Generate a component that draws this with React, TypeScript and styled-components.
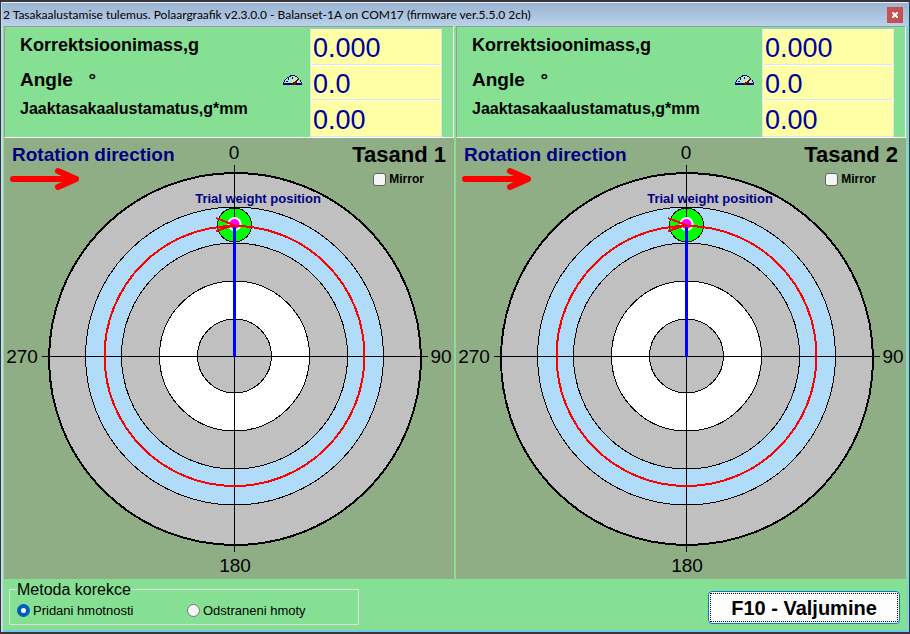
import React, { useState } from "react";
import styled, { createGlobalStyle } from "styled-components";

const GlobalStyle = createGlobalStyle`
  * { box-sizing: border-box; }
  html, body, #root { height: 100%; }
  body { margin: 0; font-family: "Liberation Sans", Arial, sans-serif; color: #000; }
`;

const Window = styled.main`
  min-height: 100%;
  display: flex;
  flex-direction: column;
  background: #85e093;
  border: 1px solid #38343c;
  border-top-width: 2px;
  border-bottom-width: 2px;
  box-shadow: inset 2px 0 #c5d9ea, inset -2px 0 #78d4ea, inset 0 -2px #6fcbe8;
  padding: 0 3px 2px;
`;

const TitleBar = styled.header`
  display: flex;
  align-items: center;
  justify-content: space-between;
  height: 24px;
  margin: 0 -2px;
  padding: 0 5px 0 1px;
  background: linear-gradient(#9ab3d0, #b9d1ea);
  border-top: 1px solid #e6eef7;
`;

const Title = styled.h1`
  margin: 0;
  font: 400 12px/18px Lato, sans-serif;
  white-space: nowrap;
`;

const CloseButton = styled.button`
  display: grid;
  place-items: center;
  width: 16px;
  height: 16px;
  padding: 0;
  border: 0;
  background: #c75050;
`;

const Planes = styled.div`
  display: grid;
  grid-template-columns: 1fr 1fr;
  gap: 2px;
`;

const Plane = styled.section`
  min-width: 0;
`;

const Readings = styled.div`
  display: grid;
  grid-template-columns: 1fr 132px;
  height: 112px;
  padding: 2px 11px 0 15px;
  border: 1px solid #fff;
  border-top-color: #9a9a9a;
  border-left-color: #9a9a9a;
`;

const Labels = styled.div`
  display: grid;
  grid-template-rows: 35px 29px 1fr;
  font-weight: 700;
`;

const ReadingLabel = styled.label<{ $size: number }>`
  display: flex;
  align-items: center;
  justify-content: space-between;
  height: 32px;
  padding-right: 8px;
  font-size: ${(p) => p.$size}px;
  white-space: pre;
`;

const Values = styled.div`
  display: grid;
  grid-template-rows: 36px 35px 1fr;
`;

const Value = styled.input`
  width: 100%;
  min-width: 0;
  padding: 3px 0 0 2px;
  border: 1px solid #e4e4e4;
  border-top-color: #fff;
  background: #ffffa6;
  color: #00009c;
  font: 27px "Liberation Sans", Arial, sans-serif;
  outline: 0;
`;

const Plot = styled.div`
  display: grid;
  background: #8fae86;
  > * { grid-area: 1 / 1; }
`;

const Dial = styled.svg`
  display: block;
  width: 100%;
  height: auto;
  font: 19px "Liberation Sans", Arial, sans-serif;
`;

const PlotHeader = styled.div`
  z-index: 1;
  align-self: start;
  display: flex;
  justify-content: space-between;
  padding: 5px 8px 0 6px;
`;

const Direction = styled.div`
  padding-left: 2px;
  color: #000082;
  font-size: 19px;
  line-height: 24px;
  font-weight: 700;
`;

const PlaneTitle = styled.h2`
  margin: 0;
  font-size: 22px;
  line-height: 24px;
`;

const Mirror = styled.label`
  display: flex;
  align-items: center;
  gap: 3px;
  height: 24px;
  padding-left: 21px;
  font-size: 12px;
  font-weight: 700;
`;

const Check = styled.input`
  appearance: none;
  width: 13px;
  height: 13px;
  margin: 0;
  border: 1px solid #626262;
  border-radius: 3px;
  background: #f5f5f5;
  &:checked { background: #005fb8; }
`;

const Footer = styled.footer`
  flex: 1;
  display: flex;
  align-items: flex-start;
  justify-content: space-between;
  padding: 2px 6px 0 5px;
`;

const Method = styled.fieldset`
  display: grid;
  grid-template-columns: 170px 1fr;
  width: 350px;
  height: 44px;
  margin: 0;
  padding: 0 7px;
  border: 1px solid #dcdcdc;
`;

const Legend = styled.legend`
  padding: 0;
  font-size: 16px;
  line-height: 17px;
`;

const Option = styled.label`
  display: flex;
  align-items: center;
  gap: 3px;
  height: 24px;
  font-size: 13px;
`;

const Radio = styled.input`
  appearance: none;
  width: 13px;
  height: 13px;
  margin: 0;
  border: 1px solid #767676;
  border-radius: 50%;
  background: #f5f5f5;
  &:checked { border: 4px solid #005fb8; background: #fff; }
`;

const ExitButton = styled.button`
  width: 192px;
  height: 33px;
  margin-top: 10px;
  padding: 1px;
  border: 1px solid #0078d4;
  border-radius: 4px;
  background: #fdfdfd;
  font: 700 20px "Liberation Sans", Arial, sans-serif;
  color: #000;
`;

const ExitLabel = styled.span`
  display: block;
  height: 29px;
  border: 1px dotted #000;
  line-height: 29px;
`;

function GaugeIcon() {
  return (
    <svg width="19" height="10" viewBox="0 0 19 10" shapeRendering="crispEdges" aria-hidden="true">
      <path d="M1 8V6h1V4h2V2h3V1h5v1h3v1h1v2h1v2h1v1z" fill="#b5ecc0" />
      <path d="M0 8h19v2H0zM0 7h1v1H0zM1 5h1v2H1zM2 4h1v1H2zM3 3h1v1H3zM4 2h2v1H4zM6 1h2v1H6zM7 0h5v1H7zM12 1h2v1h-2zM14 2h1v1h-1zM17 5h1v2h-1zM18 7h1v1h-1zM9 2h1v2H9zM5 3h1v2H5zM3 6h2v1H3z" fill="#00007c" />
      <path d="M9 8h4v2H9zM10 7h4v1h-4zM12 6h2v1h-2zM13 5h2v1h-2zM14 4h2v1h-2zM15 3h1v1h-1z" fill="#800000" />
    </svg>
  );
}

function ArrowIcon() {
  return (
    <svg width="72" height="24" viewBox="0 0 72 24" aria-hidden="true">
      <path d="M3 12H66M48 4L66 12L48 20" fill="none" stroke="#f00" strokeWidth="6" strokeLinecap="round" strokeLinejoin="round" />
    </svg>
  );
}

function PolarDial() {
  return (
    <Dial viewBox="0 0 450 441" role="img" aria-label="Polar graph">
      <g stroke="#000" shapeRendering="crispEdges">
        <circle cx="231" cy="221" r="186" fill="#c0c0c0" strokeWidth="2" />
        <circle cx="230.5" cy="218" r="149" fill="#b0dcfa" />
        <circle cx="230.5" cy="218" r="113" fill="#c0c0c0" />
        <circle cx="230.5" cy="218" r="75" fill="#fff" />
        <circle cx="230.5" cy="218" r="37" fill="#c0c0c0" />
        <circle cx="230.5" cy="87" r="17" fill="#0f0" />
      </g>
      <g fill="#000">
        <rect x="38" y="218" width="386" height="1" />
        <rect x="230" y="27" width="1" height="387" />
      </g>
      <g fontSize="19" textAnchor="middle">
        <text x="230" y="21">0</text>
        <text x="437" y="225">90</text>
        <text x="231" y="434">180</text>
        <text x="18" y="225">270</text>
      </g>
      <text x="254" y="65" textAnchor="middle" fontSize="13" fontWeight="700" fill="#000082">Trial weight position</text>
      <circle cx="230.5" cy="86" r="6" fill="#f0f" stroke="#fff" strokeWidth="2" />
      <rect x="229" y="88" width="3" height="131" fill="#00f" />
      <g fill="none" stroke="#f00" strokeWidth="2" shapeRendering="crispEdges">
        <circle cx="230.5" cy="218" r="130" />
        <path d="M212 80L230 87L212 93" />
      </g>
    </Dial>
  );
}

const readings = [
  { key: "mass", label: "Korrektsioonimass,g", size: 18, value: "0.000" },
  { key: "angle", label: "Angle   °", size: 19, value: "0.0" },
  { key: "residual", label: "Jaaktasakaalustamatus,g*mm", size: 16, value: "0.00" },
];

function PlanePanel({ index }: { index: number }) {
  return (
    <Plane>
      <Readings>
        <Labels>
          {readings.map((r) => (
            <ReadingLabel key={r.key} htmlFor={`${r.key}-${index}`} $size={r.size}>
              {r.label}
              {r.key === "angle" && <GaugeIcon />}
            </ReadingLabel>
          ))}
        </Labels>
        <Values>
          {readings.map((r) => (
            <Value key={r.key} id={`${r.key}-${index}`} defaultValue={r.value} readOnly />
          ))}
        </Values>
      </Readings>
      <Plot>
        <PolarDial />
        <PlotHeader>
          <div>
            <Direction>Rotation direction</Direction>
            <ArrowIcon />
          </div>
          <div>
            <PlaneTitle>Tasand {index}</PlaneTitle>
            <Mirror>
              <Check type="checkbox" />
              Mirror
            </Mirror>
          </div>
        </PlotHeader>
      </Plot>
    </Plane>
  );
}

export default function App() {
  const [method, setMethod] = useState("add");
  return (
    <Window>
      <GlobalStyle />
      <TitleBar>
        <Title>2 Tasakaalustamise tulemus. Polaargraafik v2.3.0.0 - Balanset-1A on COM17 (firmware ver.5.5.0 2ch)</Title>
        <CloseButton aria-label="Close">
          <svg width="6" height="6" viewBox="0 0 6 6" aria-hidden="true">
            <path d="M0 0L6 6M6 0L0 6" stroke="#fff" strokeWidth="2" />
          </svg>
        </CloseButton>
      </TitleBar>
      <Planes>
        <PlanePanel index={1} />
        <PlanePanel index={2} />
      </Planes>
      <Footer>
        <Method>
          <Legend>Metoda korekce</Legend>
          <Option>
            <Radio type="radio" name="method" checked={method === "add"} onChange={() => setMethod("add")} />
            Pridani hmotnosti
          </Option>
          <Option>
            <Radio type="radio" name="method" checked={method === "remove"} onChange={() => setMethod("remove")} />
            Odstraneni hmoty
          </Option>
        </Method>
        <ExitButton>
          <ExitLabel>F10 - Valjumine</ExitLabel>
        </ExitButton>
      </Footer>
    </Window>
  );
}
